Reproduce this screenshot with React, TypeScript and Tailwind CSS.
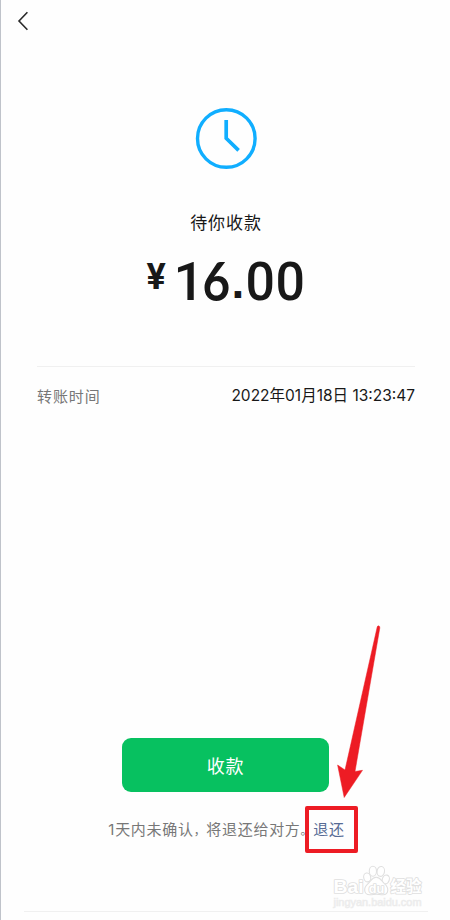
const cjk = "font-['Noto_Sans_CJK_SC',sans-serif]";
const mixed = "font-['Inter','Noto_Sans_CJK_SC',sans-serif]";

function BackIcon() {
  return (
    <svg width="12" height="20" viewBox="0 0 12 20" fill="none">
      <path d="M10.4 1.2L2 10L10.4 18.8" stroke="#292929" strokeWidth="1.6" />
    </svg>
  );
}

function ClockIcon() {
  return (
    <svg width="62" height="62" viewBox="0 0 62 62" fill="none" stroke="#10aeff">
      <circle cx="31.3" cy="30.5" r="28.8" strokeWidth="3.4" />
      <path d="M31.2 12V30.2L43.6 42.4" strokeWidth="3.7" />
    </svg>
  );
}

function Arrow() {
  return (
    <svg className="absolute left-[330px] top-[620px]" width="50" height="182" viewBox="0 0 50 182">
      <path
        d="M46.2 7Q46.6 5.6 47.8 5.9Q49 6.2 48.8 8L24 151.5L31.5 150.3L13.2 177.5L6.6 145L14 150Z"
        fill="#ed1c24"
        stroke="#ed1c24"
        strokeWidth="0.5"
      />
    </svg>
  );
}

function Watermark() {
  return (
    <svg className="absolute left-[328px] top-[862px]" width="100" height="50" viewBox="0 0 100 50">
      <g fill="#fff" stroke="#e0e0e0" strokeWidth="1.1">
        <ellipse cx="38.2" cy="15.4" rx="3.5" ry="4.5" transform="rotate(-12 38.2 15.4)" />
        <ellipse cx="43.9" cy="9.2" rx="3.6" ry="5" />
        <ellipse cx="51.8" cy="9.4" rx="3.7" ry="5" transform="rotate(10 51.8 9.4)" />
        <ellipse cx="56.8" cy="17.4" rx="3.5" ry="4.5" transform="rotate(18 56.8 17.4)" />
        <path d="M47.2 15.2C51.5 15.2 52.6 19 55.4 21.6C60.6 26 59.5 32.6 54.2 32.8C51 32.9 50 32.2 47.4 32.2C44.8 32.2 43.5 32.9 40.6 32.8C35 32.6 34 26.4 38.6 22.2C42 19 42.8 15.2 47.2 15.2Z" />
      </g>
      <g
        className="[paint-order:stroke]"
        fill="#fff"
        stroke="#e0e0e0"
        strokeWidth="1.7"
        strokeLinejoin="round"
        fontFamily="Liberation Sans, sans-serif"
        fontWeight="700"
      >
        <text x="4.5" y="31.3" fontSize="19" textLength="30" lengthAdjust="spacingAndGlyphs">Bai</text>
        <text x="39.8" y="30.5" fontSize="12" textLength="15.5" lengthAdjust="spacingAndGlyphs">du</text>
        <text x="61.5" y="30.3" fontSize="15.5" fontFamily="Noto Sans CJK SC, sans-serif" textLength="31">经验</text>
      </g>
      <text
        x="4.5"
        y="43.5"
        fontSize="10.5"
        fontFamily="Liberation Sans, sans-serif"
        fill="#f1f1f1"
        stroke="#ececec"
        strokeWidth="0.6"
        textLength="88"
        lengthAdjust="spacingAndGlyphs"
      >
        jingyan.baidu.com
      </text>
    </svg>
  );
}

export default function App() {
  return (
    <div className="relative flex h-[920px] w-[450px] flex-col overflow-hidden border-l border-[#bfc3ca] bg-[#fefefe]">
      <header className="flex h-[41px] items-center pl-[16px]">
        <BackIcon />
      </header>

      <main className="flex flex-1 flex-col items-center">
        <div className="ml-px mt-[67px]">
          <ClockIcon />
        </div>
        <h1 className={`ml-px mt-[40px] h-6 text-[17px] leading-6 tracking-[0.9px] text-[#181818] ${cjk}`}>待你收款</h1>

        <div className="ml-[4px] mt-[17px] flex h-[62px] w-[162px] font-['Roboto',sans-serif] font-medium text-[#181818]">
          <span className="w-[27px] text-[36px] font-bold leading-[53px]">¥</span>
          <span className="flex text-center text-[54px] leading-[62px]">
            <span className="w-[27px]">1</span>
            <span className="flex w-[31px] justify-center font-['Lato',sans-serif] text-[53px] font-bold leading-[60px]">
              <span className="scale-x-90">6</span>
            </span>
            <span className="w-[13px] font-['Liberation_Sans',sans-serif] text-[46px] font-bold">.</span>
            <span className="flex w-[31px] justify-center">
              <span className="scale-x-[.96]">0</span>
            </span>
            <span className="flex w-[30px] justify-center">
              <span className="scale-x-[.96]">0</span>
            </span>
          </span>
        </div>

        <section className="ml-[36px] mt-[53px] flex w-[378px] justify-between self-start border-t border-[#f0f0f0] pt-[17px] leading-6">
          <span className={`text-[15px] tracking-[0.9px] text-[#777777] ${cjk}`}>转账时间</span>
          <span className={`text-[15.5px] text-[#181818] ${mixed}`}>2022年01月18日 13:23:47</span>
        </section>

        <button className={`mb-[26px] mt-auto h-[54px] w-[207px] rounded-[9px] bg-[#07c160] text-[18px] tracking-[0.8px] text-white ${cjk}`}>
          收款
        </button>
        <p className={`mb-[69px] ml-[2px] h-6 whitespace-nowrap text-[15px] leading-6 tracking-[0.7px] text-[#777777] ${mixed}`}>
          1天内未确认<span className="text-[12px]">，</span>将退还给对方<span className="text-[12px]">。</span>
          <a className="text-[#576b95]">退还</a>
        </p>
        <div className="mb-[8px] ml-[23px] h-px w-[404px] self-start bg-[#f0f0f0]" />
      </main>

      <Arrow />
      <div className="absolute left-[304px] top-[806px] h-[47px] w-[53px] rounded-[2px] border-4 border-[#ed1c24]" />
      <Watermark />
    </div>
  );
}
